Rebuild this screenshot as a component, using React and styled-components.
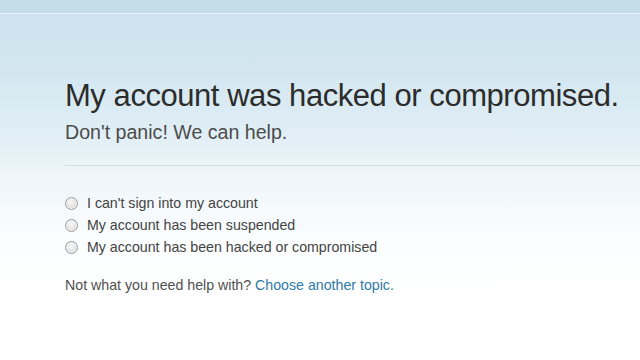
import React from "react";
import styled, { createGlobalStyle } from "styled-components";

const Global = createGlobalStyle`
  html, body { margin: 0; padding: 0; background: #fff; }
  body { font-family: "Liberation Sans", Arial, sans-serif; }
`;

const Page = styled.div`
  width: 640px;
  height: 360px;
  overflow: hidden;
  background: linear-gradient(
    to bottom,
    #cde2ed 0px,
    #d3e6f0 70px,
    #e0eef5 130px,
    #eff6fa 180px,
    #fbfdfe 240px,
    #ffffff 290px
  );
`;

const TopBar = styled.div`
  height: 13px;
  background: #c5dde9;
  border-bottom: 1px solid #e8f2f8;
`;

const Main = styled.main`
  padding: 64px 0 0 65px;
`;

const Title = styled.h1`
  margin: 0;
  font-size: 31px;
  line-height: 36px;
  font-weight: normal;
  letter-spacing: -0.45px;
  color: #2c2c2c;
`;

const Subtitle = styled.p`
  margin: 7px 0 0;
  font-size: 19.6px;
  line-height: 22px;
  color: #4c4c4c;
`;

const Divider = styled.hr`
  margin: 22px 0 0;
  border: 0;
  height: 1px;
  background: #d8dde1;
`;

const Options = styled.div`
  margin-top: 26px;
  display: flex;
  flex-direction: column;
`;

const Option = styled.label`
  display: flex;
  align-items: center;
  height: 22px;
  font-size: 14.2px;
  color: #444;
`;

const Radio = styled.span`
  box-sizing: border-box;
  width: 13px;
  height: 13px;
  margin-right: 9px;
  border-radius: 50%;
  border: 1px solid #9a9a9a;
  background: radial-gradient(circle at 45% 40%, #fafafa 0%, #e6e6e6 45%, #cfcfcf 100%);
  box-shadow: inset 0 0 0 1px #f4f4f4;
  flex: none;
`;

const Footer = styled.p`
  margin: 16px 0 0;
  font-size: 14.2px;
  line-height: 22px;
  color: #505050;
`;

const Link = styled.a`
  color: #2f7aa8;
  text-decoration: none;
`;

const items = [
  "I can't sign into my account",
  "My account has been suspended",
  "My account has been hacked or compromised",
];

export default function App() {
  return (
    <>
      <Global />
      <Page>
        <TopBar />
        <Main>
          <Title>My account was hacked or compromised.</Title>
          <Subtitle>Don't panic! We can help.</Subtitle>
          <Divider />
          <Options>
            {items.map((t) => (
              <Option key={t}>
                <Radio />
                {t}
              </Option>
            ))}
          </Options>
          <Footer>
            Not what you need help with? <Link href="#">Choose another topic.</Link>
          </Footer>
        </Main>
      </Page>
    </>
  );
}
